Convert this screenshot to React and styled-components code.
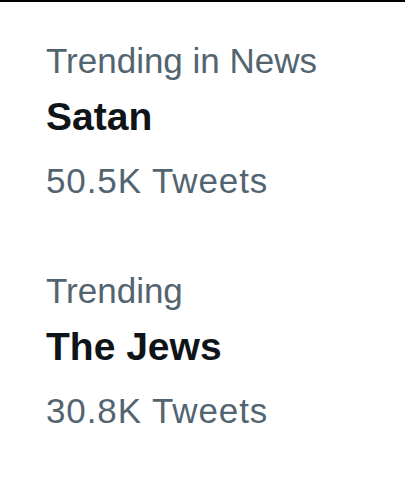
import React from "react";
import styled, { createGlobalStyle } from "styled-components";

const Global = createGlobalStyle`
  html, body { margin: 0; padding: 0; background: #ffffff; }
  body { font-family: "Liberation Sans", Arial, sans-serif; }
`;

const Page = styled.div`
  width: 405px;
  height: 480px;
  box-sizing: border-box;
  border-top: 2px solid #000000;
  background: #ffffff;
  padding: 39px 0 0 46px;
  display: flex;
  flex-direction: column;
  gap: 70px;
  overflow: hidden;
`;

const Item = styled.div`
  display: flex;
  flex-direction: column;
`;

const Context = styled.div`
  font-size: 35px;
  line-height: 40px;
  color: #536471;
  white-space: nowrap;
`;

const Name = styled.div`
  font-size: 39px;
  line-height: 44px;
  font-weight: 700;
  color: #0f1419;
  margin-top: 14px;
  white-space: nowrap;
`;

const Count = styled.div`
  font-size: 35px;
  line-height: 40px;
  letter-spacing: 0.9px;
  color: #536471;
  margin-top: 22px;
  white-space: nowrap;
`;

const trends = [
  { context: "Trending in News", name: "Satan", count: "50.5K Tweets" },
  { context: "Trending", name: "The Jews", count: "30.8K Tweets" },
];

export default function App() {
  return (
    <>
      <Global />
      <Page>
        {trends.map((t) => (
          <Item key={t.name}>
            <Context>{t.context}</Context>
            <Name>{t.name}</Name>
            <Count>{t.count}</Count>
          </Item>
        ))}
      </Page>
    </>
  );
}
